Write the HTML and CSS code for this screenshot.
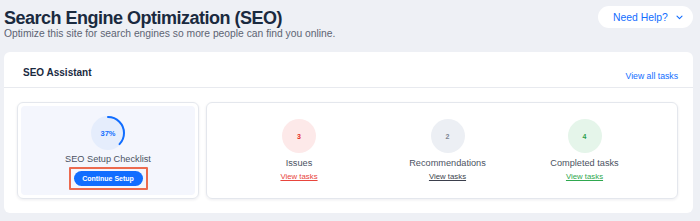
FILE: index.html
```html
<!DOCTYPE html>
<html lang="en">
<head>
<meta charset="utf-8">
<title>SEO</title>
<link rel="stylesheet" href="styles.css">
</head>
<body>
<div class="page">
  <header class="top">
    <div class="heading">
      <h1 class="title">Search Engine Optimization (SEO)</h1>
      <p class="subtitle">Optimize this site for search engines so more people can find you online.</p>
    </div>
    <button class="help">
      <span>Need Help?</span>
      <svg class="chev" width="7" height="5" viewBox="0 0 7 5"><path d="M1 1.2 L3.5 3.6 L6 1.2" fill="none" stroke="#116dff" stroke-width="1.1" stroke-linecap="round" stroke-linejoin="round"/></svg>
    </button>
  </header>

  <section class="card">
    <div class="card-head">
      <h2 class="card-title">SEO Assistant</h2>
      <a class="all-link">View all tasks</a>
    </div>
    <div class="card-body">
      <div class="checklist">
        <div class="checklist-inner">
          <div class="ring">
            <svg width="34" height="34" viewBox="0 0 34 34">
              <circle cx="17" cy="17" r="17" fill="#e5edfc"/>
              <circle cx="17" cy="17" r="16" fill="none" stroke="#116dff" stroke-width="2" stroke-dasharray="37.2 100.5" stroke-linecap="round" transform="rotate(-90 17 17)"/>
            </svg>
            <span class="ring-text">37%</span>
          </div>
          <div class="check-label">SEO Setup Checklist</div>
          <div class="highlight">
            <button class="continue">Continue Setup</button>
          </div>
        </div>
      </div>
      <div class="stats">
        <div class="stat">
          <div class="bubble bubble-red">3</div>
          <div class="stat-label">Issues</div>
          <a class="stat-link link-red">View tasks</a>
        </div>
        <div class="stat">
          <div class="bubble bubble-gray">2</div>
          <div class="stat-label">Recommendations</div>
          <a class="stat-link link-gray">View tasks</a>
        </div>
        <div class="stat">
          <div class="bubble bubble-green">4</div>
          <div class="stat-label">Completed tasks</div>
          <a class="stat-link link-green">View tasks</a>
        </div>
      </div>
    </div>
  </section>
</div>
</body>
</html>
```

FILE: styles.css
```css
* { box-sizing: border-box; }
html, body { margin: 0; padding: 0; }
body {
  background: #eef0f5;
  font-family: "Liberation Sans", Arial, sans-serif;
  color: #3b3f4c;
}
.page {
  padding: 6px 7px 0 4px;
}
.top {
  display: flex;
  justify-content: space-between;
  align-items: flex-start;
}
.title {
  margin: 3px 0 0;
  font-size: 18px;
  line-height: 19px;
  font-weight: 700;
  letter-spacing: -0.5px;
  color: #1a2a3f;
}
.subtitle {
  margin: 0;
  font-size: 10.3px;
  line-height: 12px;
  color: #5d6473;
}
.help {
  display: flex;
  align-items: center;
  gap: 8px;
  height: 22px;
  width: 95px;
  padding: 0 10px 0 15px;
  border: none;
  border-radius: 11px;
  background: #ffffff;
  font-family: inherit;
  font-size: 10.4px;
  color: #116dff;
}
.chev { display: block; }

.card {
  margin-top: 12px;
  background: #ffffff;
  border-radius: 6px;
}
.card-head {
  display: flex;
  justify-content: space-between;
  align-items: flex-start;
  height: 36px;
  padding: 0 15px 0 19px;
  border-bottom: 1px solid #e8eaef;
}
.card-title {
  margin: 15px 0 0;
  font-size: 10px;
  line-height: 12px;
  font-weight: 700;
  color: #1a2a3f;
}
.all-link {
  margin-top: 19px;
  font-size: 8.7px;
  line-height: 10px;
  color: #116dff;
}
.card-body {
  display: grid;
  grid-template-columns: 182px 1fr;
  gap: 7px;
  padding: 14px 15px 14px 13px;
}
.checklist {
  height: 97px;
  padding: 3px;
  border: 1px solid #e4e7ed;
  border-radius: 6px;
  box-shadow: 0 1px 3px rgba(20, 30, 60, 0.08);
}
.checklist-inner {
  height: 100%;
  display: flex;
  flex-direction: column;
  align-items: center;
  padding-top: 10px;
  background: #f4f6fd;
  border-radius: 4px;
}
.ring {
  position: relative;
  width: 34px;
  height: 34px;
}
.ring svg { display: block; }
.ring-text {
  position: absolute;
  inset: 0;
  display: flex;
  align-items: center;
  justify-content: center;
  font-size: 7.5px;
  font-weight: 700;
  color: #116dff;
}
.check-label {
  margin-top: 3px;
  font-size: 9.2px;
  line-height: 12px;
  color: #4b5262;
}
.highlight {
  margin-top: 2px;
  padding: 2px 3px;
  border: 2px solid #ec6a4f;
  border-radius: 1px;
}
.continue {
  display: block;
  height: 15px;
  width: 69px;
  padding: 0;
  border: none;
  border-radius: 8px;
  background: #116dff;
  color: #ffffff;
  font-family: inherit;
  font-size: 7px;
  font-weight: 700;
}
.stats {
  height: 97px;
  display: grid;
  grid-template-columns: 184px 113px 161px;
  padding-top: 16px;
  border: 1px solid #e4e7ed;
  border-radius: 6px;
  box-shadow: 0 1px 3px rgba(20, 30, 60, 0.08);
}
.stat {
  display: flex;
  flex-direction: column;
  align-items: center;
}
.bubble {
  width: 34px;
  height: 34px;
  border-radius: 50%;
  display: flex;
  align-items: center;
  justify-content: center;
  font-size: 7px;
  font-weight: 700;
}
.bubble-red { background: #fde9e9; color: #e62e24; }
.bubble-gray { background: #eceff4; color: #7d8592; }
.bubble-green { background: #e5f5ea; color: #2e9e4c; }
.stat-label {
  margin-top: 4px;
  font-size: 9.2px;
  line-height: 12px;
  color: #4b5262;
  white-space: nowrap;
}
.stat-link {
  margin-top: 3px;
  font-size: 7.8px;
  line-height: 10px;
  text-decoration: underline;
}
.link-red { color: #e8453c; }
.link-gray { color: #3b3f4c; }
.link-green { color: #2fa84f; }
```
